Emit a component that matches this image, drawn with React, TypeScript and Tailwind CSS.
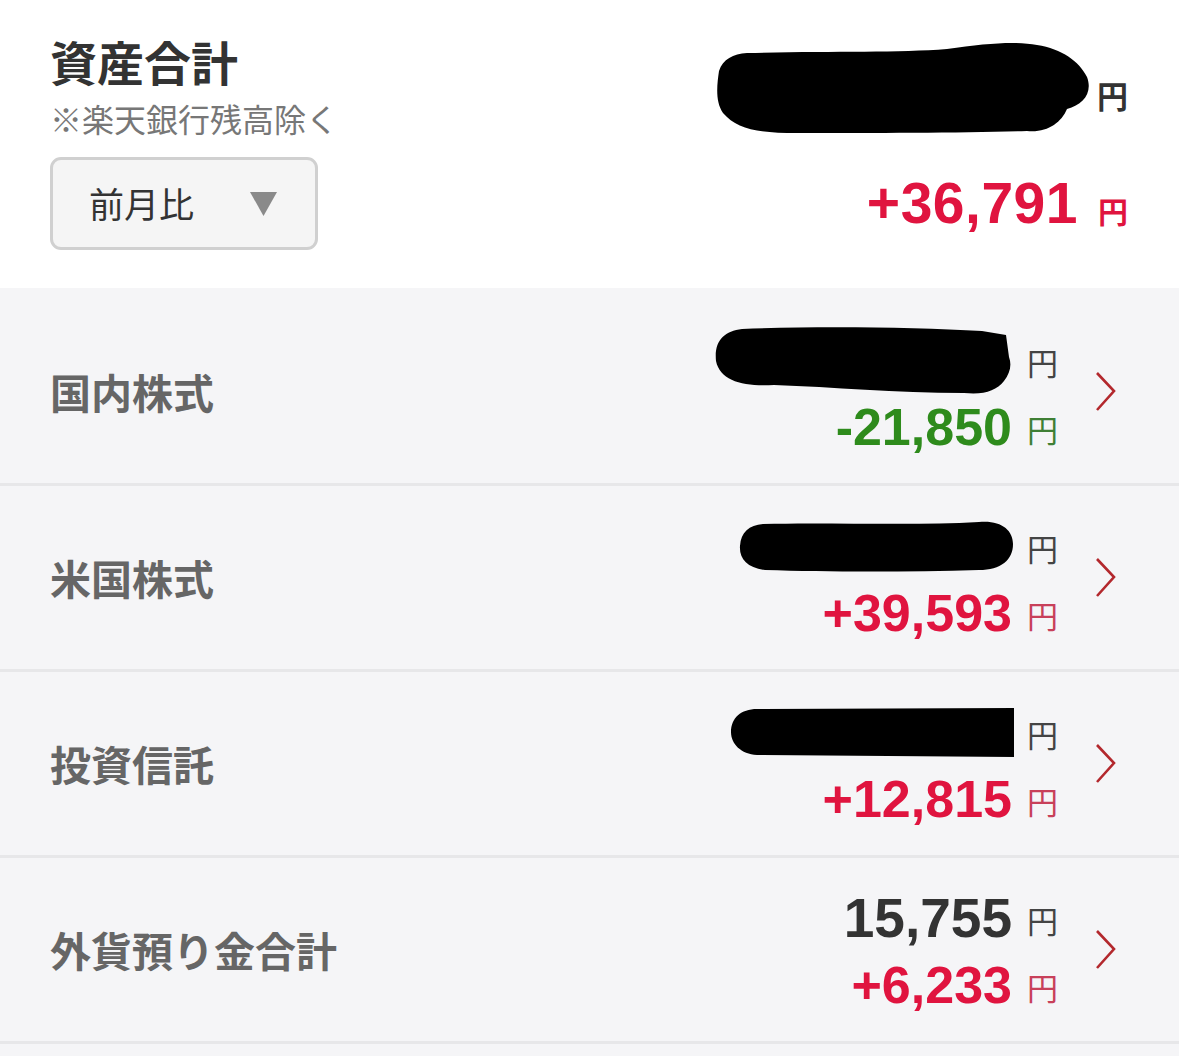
import React from "react";

const jp = "font-['Noto_Sans_CJK_JP',sans-serif]";
const num = "font-['Liberation_Sans','Noto_Sans_CJK_JP',sans-serif]";

type Row = {
  label: string;
  value?: string;
  blob?: { w: number; h: number; d: string };
  diff: string;
  diffColor: string;
  yenColor: string;
};

const rows: Row[] = [
  {
    label: "国内株式",
    blob: {
      w: 300,
      h: 68,
      d: "M28 2 C100 -1 200 0 268 4 L292 8 L295 30 C298 38 296 46 290 54 C282 64 270 68 250 66 C180 66 120 60 60 58 C30 60 6 54 2 34 C0 14 10 4 28 2 Z",
    },
    diff: "-21,850",
    diffColor: "text-[#2e8b1c]",
    yenColor: "text-[#3f7f35]",
  },
  {
    label: "米国株式",
    blob: {
      w: 275,
      h: 54,
      d: "M24 4 C90 2 170 6 240 2 C262 0 274 10 274 24 C274 40 262 50 240 50 C170 52 90 52 26 50 C8 48 0 38 1 26 C2 12 10 5 24 4 Z",
    },
    diff: "+39,593",
    diffColor: "text-[#e0143f]",
    yenColor: "text-[#c8405a]",
  },
  {
    label: "投資信託",
    blob: {
      w: 283,
      h: 50,
      d: "M26 1 L283 0 L283 49 L26 47 C10 46 0 36 0 24 C0 10 10 1 26 1 Z",
    },
    diff: "+12,815",
    diffColor: "text-[#e0143f]",
    yenColor: "text-[#c8405a]",
  },
  {
    label: "外貨預り金合計",
    value: "15,755",
    diff: "+6,233",
    diffColor: "text-[#e0143f]",
    yenColor: "text-[#c8405a]",
  },
];

function Chevron() {
  return (
    <svg width="24" height="40" viewBox="0 0 24 40" className="shrink-0">
      <path d="M3 1 L20 19 L3 38" fill="none" stroke="#b3282d" strokeWidth="2.6" />
    </svg>
  );
}

export default function App() {
  return (
    <div className={`w-[1179px] h-[1056px] overflow-hidden bg-[#f5f5f7] ${jp}`}>
      {/* header */}
      <div className="h-[288px] bg-white flex justify-between pl-[50px] pr-[51px]">
        <div className="flex flex-col pt-[32px]">
          <div className="text-[47px] leading-[58px] font-bold text-[#333]">資産合計</div>
          <div className="text-[32px] leading-[50px] text-[#777] mt-[3px]">※楽天銀行残高除く</div>
          <div className="mt-[14px] w-[268px] h-[93px] border-[3px] border-[#d0d0d0] rounded-[11px] bg-[#f5f5f5] flex items-center justify-between pl-[36px] pr-[38px]">
            <span className="text-[35px] text-[#333]">前月比</span>
            <svg width="27" height="24" viewBox="0 0 27 24">
              <path d="M0 0 H27 L13.5 24 Z" fill="#8a8a8a" />
            </svg>
          </div>
        </div>
        <div className="flex flex-col items-end pt-[40px]">
          <div className="flex items-center h-[96px]">
            <svg width="374" height="94" viewBox="0 0 374 94" className="mr-[6px]">
              <path
                d="M30 12 C110 10 180 12 230 8 C270 2 300 0 320 4 C345 8 362 20 370 36 C376 52 366 64 350 68 C344 82 330 92 310 90 C250 92 160 92 80 92 C40 92 20 88 6 72 C-2 60 0 44 2 30 C6 18 16 13 30 12 Z"
                fill="#000"
              />
            </svg>
            <span className="text-[31px] font-bold text-[#333] mt-[14px]">円</span>
          </div>
          <div className="flex items-baseline mt-[25px]">
            <span className={`${num} text-[57px] font-bold text-[#e0143f] tracking-[0.5px]`}>+36,791</span>
            <span className="text-[30px] font-bold text-[#e0143f] ml-[20px]">円</span>
          </div>
        </div>
      </div>

      {/* list */}
      <div className="pt-[12px]">
        {rows.map((r) => (
          <div
            key={r.label}
            className="h-[186px] border-b-[3px] border-[#e7e7e9] flex items-center pl-[50px] pr-[61px]"
          >
            <div className="text-[41px] font-bold text-[#666] flex-1">{r.label}</div>
            <div className="flex flex-col items-end mr-[36px] mt-[4px]">
              <div className="flex items-center h-[66px]">
                {r.blob ? (
                  <svg width={r.blob.w} height={r.blob.h} viewBox={`0 0 ${r.blob.w} ${r.blob.h}`} className="mr-[-2px]">
                    <path d={r.blob.d} fill="#000" />
                  </svg>
                ) : (
                  <span className={`${num} text-[55px] font-semibold text-[#333]`}>{r.value}</span>
                )}
                <span className="text-[31px] text-[#444] ml-[15px] mt-[4px]">円</span>
              </div>
              <div className="flex items-center h-[66px]">
                <span className={`${num} text-[52px] font-bold ${r.diffColor}`}>{r.diff}</span>
                <span className={`text-[31px] ml-[15px] mt-[6px] ${r.yenColor}`}>円</span>
              </div>
            </div>
            <Chevron />
          </div>
        ))}
      </div>
    </div>
  );
}
